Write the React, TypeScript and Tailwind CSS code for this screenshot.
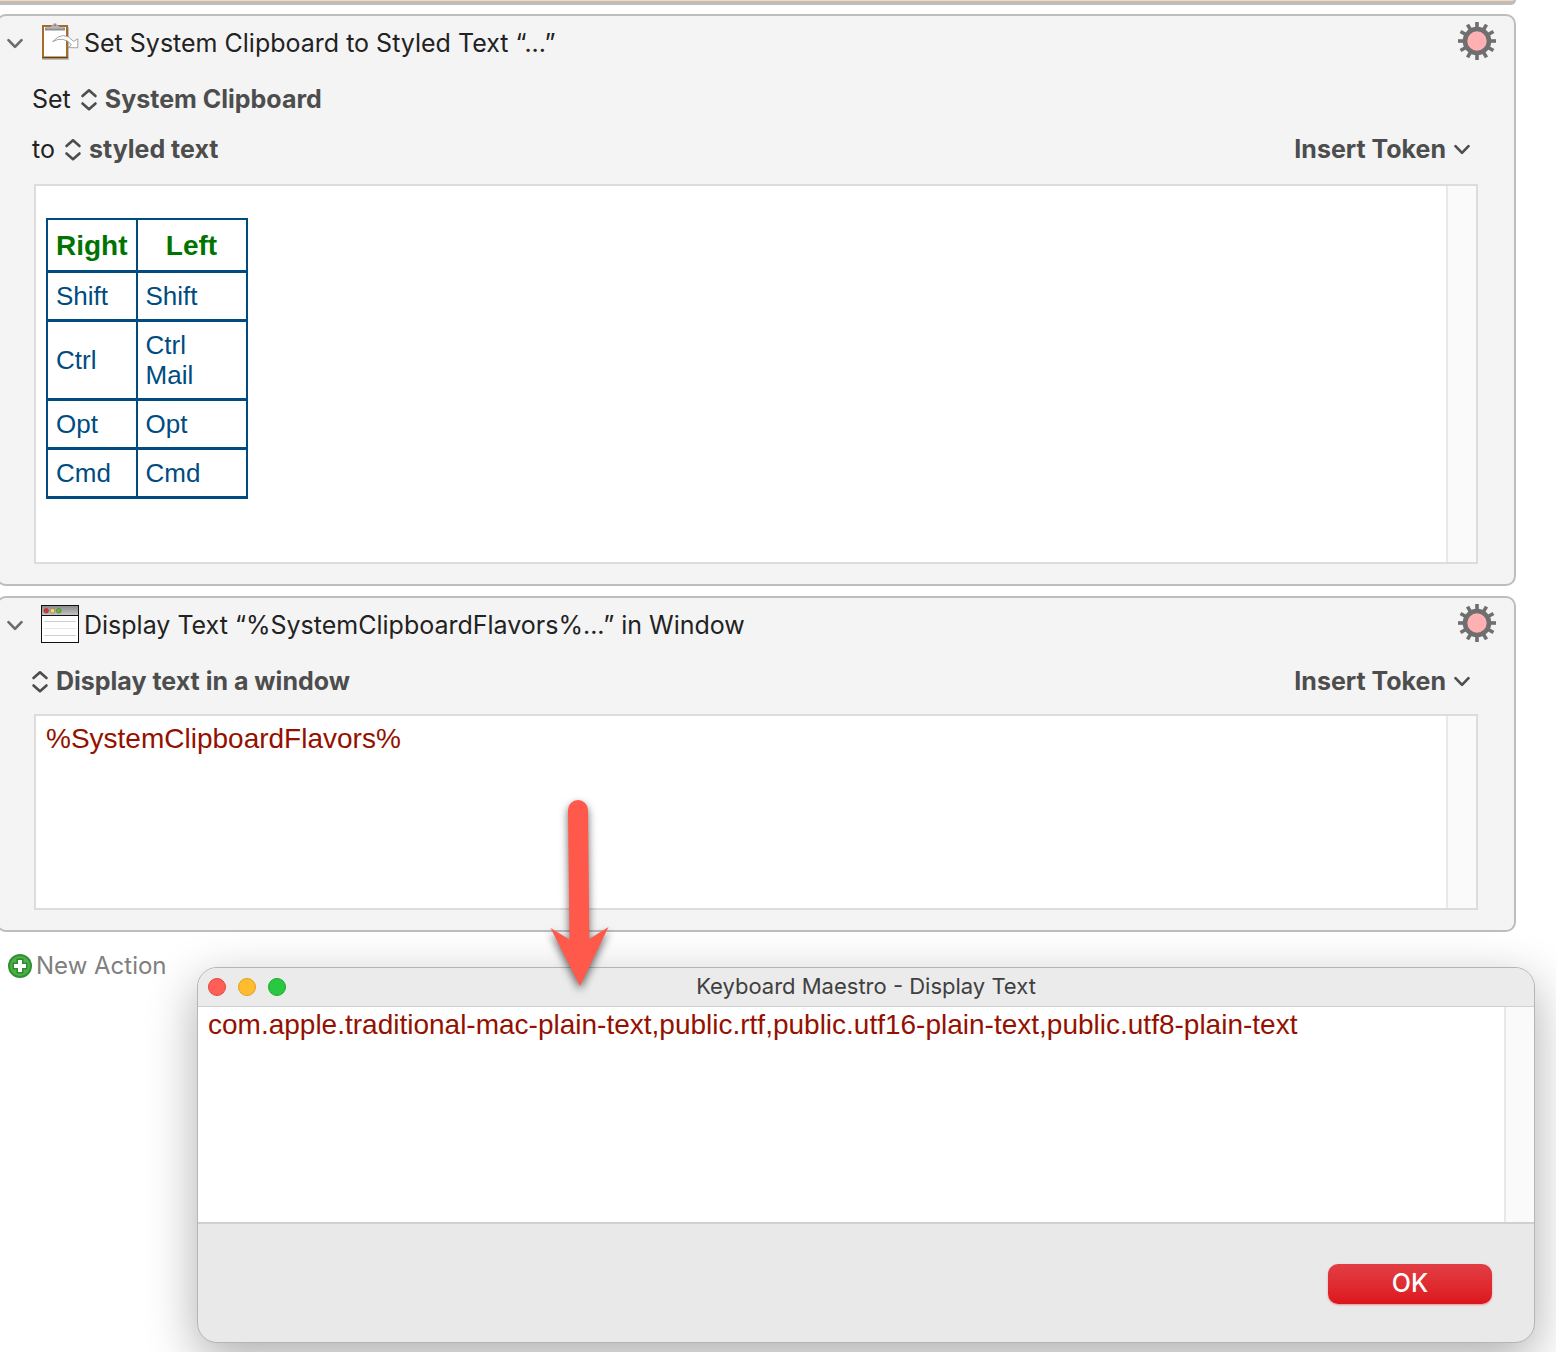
import { useState, type ReactNode } from 'react';

type Row = { right: string; left: string[] };

const rows: Row[] = [
  { right: 'Shift', left: ['Shift'] },
  { right: 'Ctrl', left: ['Ctrl', 'Mail'] },
  { right: 'Opt', left: ['Opt'] },
  { right: 'Cmd', left: ['Cmd'] },
];

const flavors =
  'com.apple.traditional-mac-plain-text,public.rtf,public.utf16-plain-text,public.utf8-plain-text';

const gearTeeth = [0, 30, 60, 90, 120, 150, 180, 210, 240, 270, 300, 330];

function ChevronDown({ className }: { className: string }) {
  return (
    <svg viewBox="0 0 16 16" className={className} fill="none" stroke="currentColor" strokeLinecap="round" strokeLinejoin="round" aria-hidden="true">
      <path d="M1.5 4.2 L8 10.9 L14.5 4.2" strokeWidth="2.6" />
    </svg>
  );
}

function UpDown() {
  return (
    <svg viewBox="0 0 20 24" className="h-6 w-5 shrink-0 text-[#4d4d4d]" fill="none" stroke="currentColor" strokeWidth="2.6" strokeLinecap="round" strokeLinejoin="round" aria-hidden="true">
      <path d="M3.5 8 L10 2.3 L16.5 8" />
      <path d="M3.5 15.5 L10 21.2 L16.5 15.5" />
    </svg>
  );
}

function Gear() {
  return (
    <svg viewBox="0 0 38 38" className="h-[38px] w-[38px]" aria-hidden="true">
      {gearTeeth.map((deg) => (
        <rect key={deg} x="17.2" y="0" width="3.6" height="8" fill="#6f6f6f" transform={`rotate(${deg} 19 19)`} />
      ))}
      <circle cx="19" cy="19" r="12" fill="#ffb0b3" stroke="#6f6f6f" strokeWidth="4.6" />
    </svg>
  );
}

function ClipboardIcon() {
  return (
    <svg viewBox="0 0 38 38" className="h-[38px] w-[38px] shrink-0" aria-hidden="true">
      <rect x="1" y="4" width="27" height="33" rx="1" fill="#bdbdbd" />
      <rect x="2" y="3" width="24" height="31.4" fill="#fff" stroke="#a36b2c" strokeWidth="2" />
      <path d="M1.500 34.600 H27" stroke="#5d3b14" strokeWidth="1" />
      <path d="M4 7.500 V4.500 H24 V7.500 Z" fill="#8f8f8f" />
      <path d="M6 4.5 Q10 4 11.500 2.500 Q12 0 14 0 Q16 0 16.500 2.500 Q18 4 22 4.500 V5.700 H6 Z" fill="#b4b4b4" />
      <circle cx="14" cy="2.2" r="0.9" fill="#777" />
      <path
        d="M11.6 18.6 Q22.5 6.5 32.6 18.4 L36.8 15.8 V24.8 L27.6 24.6 L30.4 21.6 Q22.5 12.5 11.6 18.6 Z"
        fill="#fff"
        stroke="#8d8d8d"
        strokeWidth="0.8"
      />
    </svg>
  );
}

function WindowIcon() {
  return (
    <svg viewBox="0 0 38 38" className="h-[38px] w-[38px] shrink-0" aria-hidden="true">
      <defs>
        <linearGradient id="bar" x1="0" y1="0" x2="0" y2="1">
          <stop offset="0" stopColor="#8a8a8a" />
          <stop offset="1" stopColor="#c4c4c4" />
        </linearGradient>
      </defs>
      <rect x="0.5" y="0.5" width="37" height="37" fill="#fff" stroke="#111" />
      <rect x="1" y="1" width="36" height="9" fill="url(#bar)" />
      <path d="M0 10.5 H38" stroke="#111" />
      <circle cx="5.2" cy="5.8" r="2.3" fill="#e0322e" stroke="#7d3431" strokeWidth="0.6" />
      <circle cx="11.5" cy="5.8" r="2.3" fill="#f9d57d" stroke="#97722c" strokeWidth="0.6" />
      <circle cx="17.8" cy="5.8" r="2.3" fill="#62c22a" stroke="#3f7a1c" strokeWidth="0.6" />
      <path d="M3 16.5 H35 M3 30.5 H35" stroke="#cfcfcf" />
      <path d="M3 23.5 H35" stroke="#e6e6e6" />
    </svg>
  );
}

function PlusIcon() {
  return (
    <svg viewBox="0 0 24 24" className="h-6 w-6" aria-hidden="true">
      <circle cx="12" cy="12" r="11" fill="#4fb045" stroke="#2f9135" strokeWidth="2" />
      <path d="M10 6 H14 V10 H18 V14 H14 V18 H10 V14 H6 V10 H10 Z" fill="#fff" stroke="#2c8a33" strokeWidth="3" paintOrder="stroke" />
    </svg>
  );
}

function Arrow() {
  return (
    <svg viewBox="0 0 80 210" className="absolute top-[790px] left-[540px] h-[210px] w-20 drop-shadow-[0_4px_4px_rgba(0,0,0,0.6)]" aria-hidden="true">
      <path d="M28 20 A10 10 0 0 1 48 20 L49.3 149 L68.5 137 L40 196 L10.5 138 L29.5 149.5 Z" fill="#ff594b" />
    </svg>
  );
}

function PopUp({ label, options }: { label: string; options: string[] }) {
  return (
    <div className="flex items-center gap-1.5">
      <UpDown />
      <select aria-label={label} className="h-10 appearance-none bg-transparent font-bold text-[#4d4d4d]">
        {options.map((option) => (
          <option key={option}>{option}</option>
        ))}
      </select>
    </div>
  );
}

function InsertToken() {
  return (
    <button type="button" aria-haspopup="menu" className="ml-auto flex items-center gap-2 font-bold text-[#4d4d4d]">
      Insert Token
      <ChevronDown className="h-4 w-4" />
    </button>
  );
}

function ActionCard({ icon, title, children }: { icon: ReactNode; title: string; children: ReactNode }) {
  return (
    <section className="rounded-[10px] border-2 border-[#bdbdbd] bg-[#f4f4f4] pb-5">
      <header className="flex h-14 items-center pr-[18px] pl-[9px]">
        <button type="button" aria-label="Collapse action" className="text-[#6b6b6b]">
          <ChevronDown className="h-4 w-4" />
        </button>
        <div className="mr-[5px] ml-[18px] -mt-1">{icon}</div>
        <h2 className="text-[25px] text-[#222]">{title}</h2>
        <button type="button" aria-label="Action menu" className="-mt-1.5 ml-auto">
          <Gear />
        </button>
      </header>
      <div className="pt-[3px]">{children}</div>
    </section>
  );
}

function FieldRow({ children }: { children: ReactNode }) {
  return <div className="flex h-[50px] items-center gap-2 pr-11 pl-8 text-[25px] text-[#222]">{children}</div>;
}

function Gutter() {
  return <div className="w-[30px] shrink-0 border-l-2 border-[#e8e8e8] bg-[#fafafa]" />;
}

function KeyTable() {
  const cell = 'border-r-2 border-b-[3px] border-[#004c80] px-2';
  return (
    <table className="mt-8 ml-2.5 border-separate border-spacing-0 border-t-2 border-l-2 border-[#004c80] text-[26px] leading-[30px] text-[#004c80]">
      <thead className="text-[28px] text-[#007400]">
        <tr>
          <th className={`${cell} h-[53px] pt-0.5`}>Right</th>
          <th className={`${cell} w-[110px] pt-0.5`}>Left</th>
        </tr>
      </thead>
      <tbody>
        {rows.map((row) => (
          <tr key={row.right}>
            <td className={`${cell} py-2`}>{row.right}</td>
            <td className={`${cell} py-2`}>
              {row.left.map((key) => (
                <div key={key}>{key}</div>
              ))}
            </td>
          </tr>
        ))}
      </tbody>
    </table>
  );
}

function DisplayWindow() {
  return (
    <div
      role="dialog"
      aria-labelledby="window-title"
      className="absolute top-[967px] right-[21px] left-[197px] overflow-hidden rounded-[20px] border border-[#b5b5b5] bg-[#e9e9e9] shadow-[0_16px_50px_rgba(0,0,0,0.32)]"
    >
      <div className="grid h-[39px] grid-cols-[1fr_auto_1fr] items-center border-b border-[#d0d0d0] bg-[#ebebeb] px-2.5">
        <div className="flex gap-3">
          <button type="button" aria-label="Close" className="h-[18px] w-[18px] rounded-full border border-[#e2463f] bg-[#ff5f57]" />
          <button type="button" aria-label="Minimize" className="h-[18px] w-[18px] rounded-full border border-[#e1a116] bg-[#febc2e]" />
          <button type="button" aria-label="Zoom" className="h-[18px] w-[18px] rounded-full border border-[#1aab29] bg-[#28c840]" />
        </div>
        <h2 id="window-title" className="pb-0.5 text-[22px] text-[#404040]">
          Keyboard Maestro - Display Text
        </h2>
      </div>
      <div className="flex h-[217px] border-b-2 border-[#d0d0d0] bg-white">
        <textarea
          readOnly
          aria-label="Displayed text"
          value={flavors}
          className="min-w-0 flex-1 resize-none px-2.5 pt-0.5 font-['Liberation_Sans',Arial,sans-serif] text-[28px] leading-8 text-[#941100] outline-none"
        />
        <Gutter />
      </div>
      <div className="flex h-[118px] items-start justify-end pt-10 pr-[42px]">
        <button
          type="button"
          className="h-10 w-[164px] rounded-[10px] bg-linear-to-b from-[#e23d44] to-[#dc141c] text-[25px] font-medium text-white shadow-[0_1px_2px_rgba(220,20,28,0.4)]"
        >
          OK
        </button>
      </div>
    </div>
  );
}

export default function App() {
  const [text, setText] = useState('%SystemClipboardFlavors%');

  return (
    <div className="relative min-h-screen overflow-hidden bg-white font-[Inter,sans-serif]">
      <main className="-ml-1 pr-10">
        <div className="mb-[9px] h-[5px] rounded-b-[10px] border-x-2 border-b-4 border-[#bdbdbd] bg-[#ffd7ae]" />

        <ActionCard icon={<ClipboardIcon />} title="Set System Clipboard to Styled Text “...”">
          <FieldRow>
            <span className="ml-0.5">Set</span>
            <PopUp label="Destination" options={['System Clipboard']} />
          </FieldRow>
          <FieldRow>
            <span className="ml-0.5">to</span>
            <PopUp label="Content type" options={['styled text']} />
            <InsertToken />
          </FieldRow>
          <div className="mx-9 mt-[9px] flex h-[380px] border-2 border-[#dcdcdc] bg-white">
            <div
              role="textbox"
              aria-label="Styled text"
              className="flex-1 font-['Liberation_Sans',Arial,sans-serif]"
            >
              <KeyTable />
            </div>
            <Gutter />
          </div>
        </ActionCard>

        <div className="h-2.5" />

        <ActionCard icon={<WindowIcon />} title="Display Text “%SystemClipboardFlavors%...” in Window">
          <FieldRow>
            <PopUp label="Display mode" options={['Display text in a window']} />
            <InsertToken />
          </FieldRow>
          <div className="mx-9 mt-[7px] flex h-[196px] border-2 border-[#dcdcdc] bg-white">
            <textarea
              aria-label="Text to display"
              value={text}
              onChange={(e) => setText(e.target.value)}
              className="min-w-0 flex-1 resize-none px-2.5 pt-[7px] font-['Liberation_Sans',Arial,sans-serif] text-[28px] leading-8 text-[#941100] outline-none"
            />
            <Gutter />
          </div>
        </ActionCard>

        <button type="button" className="mt-[18px] ml-3 flex items-center gap-1 text-2xl text-[#808080]">
          <PlusIcon />
          New Action
        </button>
      </main>

      <DisplayWindow />
      <Arrow />
    </div>
  );
}
